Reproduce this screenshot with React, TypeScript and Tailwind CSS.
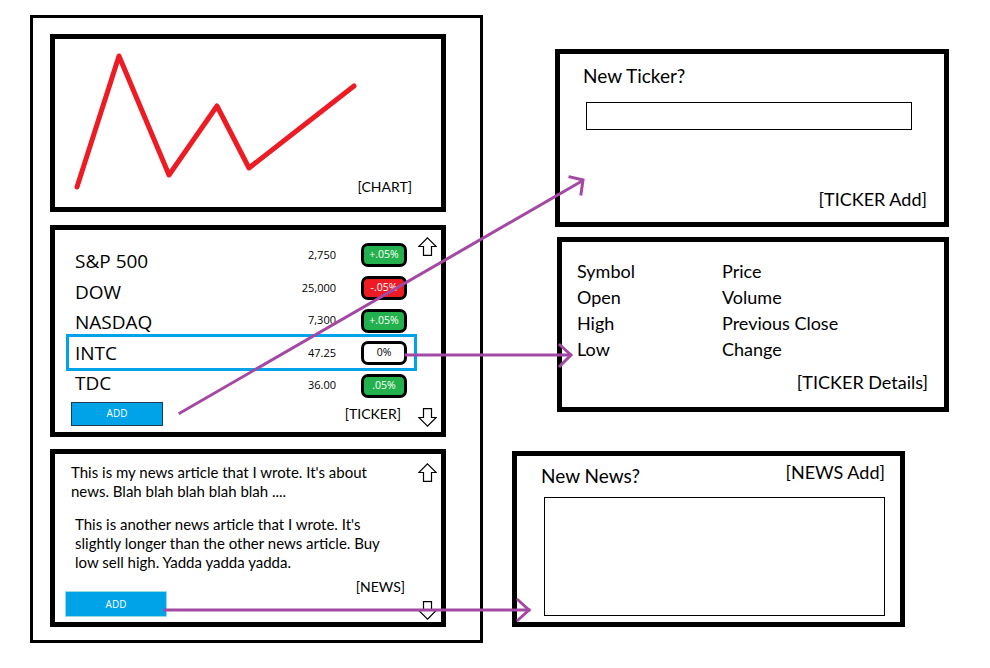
import React from "react";

type Tone = "up" | "down" | "flat";
interface Ticker { name: string; price: string; change: string; tone: Tone; }

const tickers: Ticker[] = [
  { name: "S&P 500", price: "2,750", change: "+.05%", tone: "up" },
  { name: "DOW", price: "25,000", change: "-.05%", tone: "down" },
  { name: "NASDAQ", price: "7,300", change: "+.05%", tone: "up" },
  { name: "INTC", price: "47.25", change: "0%", tone: "flat" },
  { name: "TDC", price: "36.00", change: ".05%", tone: "up" },
];

const pillTone: Record<Tone, string> = {
  up: "bg-[#22b14c] text-white",
  down: "bg-[#ed1c24] text-white",
  flat: "bg-white text-black",
};

function BlockArrow({ down = false }: { down?: boolean }) {
  return (
    <svg width="19" height="19" viewBox="0 0 19 19" className={down ? "rotate-180" : ""}>
      <path d="M9.5 0.8 L18.2 9.5 L13.5 9.5 L13.5 18.3 L5.5 18.3 L5.5 9.5 L0.8 9.5 Z" fill="white" stroke="black" strokeWidth="1.2" />
    </svg>
  );
}

function ChartPanel() {
  return (
    <div className="relative w-[396px] h-[178px] border-[5px] border-black flex flex-col justify-end items-end pr-[29px] pb-[11px]">
      <svg className="absolute inset-0" width="386" height="168" viewBox="0 0 386 168">
        <polyline
          points="22,148 64,17 114,136 162,67 194,129 299,47"
          fill="none"
          stroke="#ed1c24"
          strokeWidth="5"
          strokeLinejoin="round"
          strokeLinecap="round"
        />
      </svg>
      <span className="text-[14px] leading-[18px]">[CHART]</span>
    </div>
  );
}

function TickerPanel() {
  return (
    <div className="relative mt-[13px] w-[396px] h-[212px] border-[5px] border-black flex flex-col">
      <div className="flex items-start font-['Open_Sans',sans-serif]">
        <div className="ml-[20px] w-[200px] pt-[16px] flex flex-col text-[19px] leading-[30.5px]">
          {tickers.map((t) => <span key={t.name}>{t.name}</span>)}
        </div>
        <div className="w-[61px] pt-[9px] flex flex-col items-end text-[11px] leading-[32.5px]">
          {tickers.map((t) => <span key={t.name}>{t.price}</span>)}
        </div>
        <div className="ml-[25px] pt-[13px] flex flex-col gap-[8.75px]">
          {tickers.map((t) => (
            <div
              key={t.name}
              className={`w-[46px] h-[24px] border-[3px] border-black rounded-[7px] flex items-center justify-center text-[10.5px] ${pillTone[t.tone]}`}
            >
              {t.change}
            </div>
          ))}
        </div>
        <div className="ml-[11px] pt-[7px]">
          <BlockArrow />
        </div>
      </div>

      <div className="mt-auto flex items-end pb-[6px]">
        <button className="ml-[16px] mb-[1px] w-[92px] h-[24px] bg-[#00a2e8] border border-[#1d3b4f] text-white text-[10px] font-['Open_Sans',sans-serif]">
          ADD
        </button>
        <span className="ml-auto mb-[4px] text-[14px] leading-[18px]">[TICKER]</span>
        <div className="ml-[17px] mr-[4px]">
          <BlockArrow down />
        </div>
      </div>

      {/* selected row */}
      <div className="absolute left-[11px] top-[104px] w-[351px] h-[37px] border-[3px] border-[#00a2e8]" />
    </div>
  );
}

function NewsPanel() {
  return (
    <div className="mt-[12px] w-[396px] h-[178px] border-[5px] border-black flex">
      <div className="flex-1 flex flex-col text-[15px] leading-[19px]">
        <p className="ml-[16px] pt-[9px]">
          This is my news article that I wrote. It's about
          <br />
          news. Blah blah blah blah blah ....
        </p>
        <p className="ml-[20px] mt-[14px]">
          This is another news article that I wrote. It's
          <br />
          slightly longer than the other news article. Buy
          <br />
          low sell high. Yadda yadda yadda.
        </p>
        <div className="mt-auto flex items-end pb-[5px]">
          <button className="ml-[10px] w-[102px] h-[26px] bg-[#00a2e8] border border-[#99d9ea] text-white text-[10px] leading-none font-['Open_Sans',sans-serif]">
            ADD
          </button>
          <span className="ml-auto mr-[13px] mb-[21px] text-[14px] leading-[18px]">[NEWS]</span>
        </div>
      </div>
      <div className="mr-[4px] pt-[9px] pb-[2px] flex flex-col justify-between">
        <BlockArrow />
        <BlockArrow down />
      </div>
    </div>
  );
}

function TickerAddPanel() {
  return (
    <div className="ml-[72px] w-[394px] h-[178px] border-[5px] border-black flex flex-col text-[18px] leading-[22px]">
      <span className="ml-[23px] mt-[11px] text-[19px]">New Ticker?</span>
      <input className="ml-[26px] mt-[15px] w-[326px] h-[28px] border border-black outline-none" />
      <span className="mt-auto mb-[12px] mr-[17px] self-end">[TICKER Add]</span>
    </div>
  );
}

function TickerDetailsPanel() {
  const fields = ["Symbol", "Price", "Open", "Volume", "High", "Previous Close", "Low", "Change"];
  return (
    <div className="ml-[74px] mt-[10px] w-[392px] h-[175px] border-[5px] border-black flex flex-col text-[18px] leading-[26px]">
      <div className="ml-[15px] mt-[16px] grid grid-cols-[145px_1fr]">
        {fields.map((f) => <span key={f}>{f}</span>)}
      </div>
      <span className="mt-auto mb-[12px] mr-[16px] self-end">[TICKER Details]</span>
    </div>
  );
}

function NewsAddPanel() {
  return (
    <div className="ml-[29px] mt-[39px] w-[393px] h-[176px] border-[5px] border-black flex flex-col text-[18px] leading-[22px]">
      <div className="flex items-start justify-between">
        <span className="ml-[24px] mt-[9px] text-[19px]">New News?</span>
        <span className="mr-[15px] mt-[5px]">[NEWS Add]</span>
      </div>
      <textarea className="ml-[27px] mt-[10px] w-[341px] h-[119px] border border-black resize-none outline-none" />
    </div>
  );
}

export default function App() {
  return (
    <div className="relative w-[990px] h-[668px] bg-white text-black font-['Lato',sans-serif] flex items-start overflow-hidden">
      <div className="ml-[30px] mt-[15px] w-[453px] h-[628px] border-[3px] border-black pl-[17px] pt-[16px] flex flex-col">
        <ChartPanel />
        <TickerPanel />
        <NewsPanel />
      </div>

      <div className="pt-[49px] flex flex-col items-start">
        <TickerAddPanel />
        <TickerDetailsPanel />
        <NewsAddPanel />
      </div>

      {/* flow arrows */}
      <svg className="absolute inset-0 pointer-events-none" width="990" height="668" viewBox="0 0 990 668">
        <g fill="none" stroke="#a349a4" strokeWidth="3" strokeLinecap="square">
          <line x1="180" y1="413" x2="582" y2="181" />
          <polyline points="570,177 583,180 581,194" />
          <line x1="406" y1="355" x2="570" y2="355" />
          <polyline points="560,345 571,355 560,366" />
          <line x1="165" y1="610" x2="529" y2="610" />
          <polyline points="518,600 529,610 518,620" />
        </g>
      </svg>
    </div>
  );
}
